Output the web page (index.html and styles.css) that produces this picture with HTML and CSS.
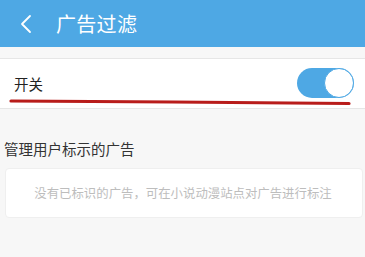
FILE: index.html
```html
<!DOCTYPE html>
<html lang="zh">
<head>
<meta charset="utf-8">
<link rel="stylesheet" href="styles.css">
</head>
<body>
<div class="page">
  <header class="topbar">
    <svg class="back" width="14" height="20" viewBox="0 0 14 20"><path d="M11 2 L3 10 L11 18" fill="none" stroke="#fff" stroke-width="1.8" stroke-linecap="round" stroke-linejoin="round"/></svg>
    <span class="title">广告过滤</span>
  </header>
  <div class="gap"></div>
  <div class="row">
    <span class="label">开关</span>
    <div class="switch"><div class="knob"></div></div>
    <svg class="mark" width="345" height="10" viewBox="0 0 345 10"><path d="M3 3 C 100 3.5, 250 4.5, 341 5.5" fill="none" stroke="#b81c1a" stroke-width="3.2" stroke-linecap="round"/></svg>
  </div>
  <div class="section-title">管理用户标示的广告</div>
  <div class="card">没有已标识的广告，可在小说动漫站点对广告进行标注</div>
</div>
</body>
</html>
```
FILE: styles.css
```css
* { box-sizing: border-box; }
html, body { margin: 0; padding: 0; }
body {
  width: 365px;
  height: 257px;
  overflow: hidden;
  background: #f7f7f7;
  font-family: "Noto Sans CJK SC", "Noto Sans", sans-serif;
}
.page { display: flex; flex-direction: column; }
.topbar {
  height: 47px;
  background: #4ea8e4;
  display: flex;
  align-items: center;
  padding-left: 19px;
}
.back { display: block; margin-right: 23px; margin-top: 1px; }
.title { color: #fff; font-size: 20px; line-height: 1; letter-spacing: 0.3px; }
.gap { height: 12px; border-bottom: 1px solid #e6e6e6; background: #f7f7f7; }
.row {
  position: relative;
  height: 50px;
  background: #fff;
  border-bottom: 1px solid #e6e6e6;
  display: flex;
  align-items: center;
  justify-content: space-between;
  padding: 0 11px 0 14px;
}
.label { font-size: 14.5px; color: #222; }
.switch {
  width: 57px;
  height: 30px;
  border-radius: 15px;
  background: #4ea8e4;
  position: relative;
  margin-top: -1px;
}
.knob {
  position: absolute;
  right: 0;
  top: 0;
  width: 30px;
  height: 30px;
  border-radius: 50%;
  background: #fff;
  border: 1.5px solid #4ea8e4;
}
.mark { position: absolute; left: 8px; top: 39px; }
.section-title {
  margin: 30px 0 0 4px;
  font-size: 14.5px;
  color: #333;
  line-height: 20px;
}
.card {
  margin: 9px 2px 0 5px;
  height: 50px;
  background: #fff;
  border: 1px solid #efefef;
  border-radius: 4px;
  display: flex;
  align-items: center;
  justify-content: center;
  font-size: 12.4px;
  color: #bdbdbd;
  padding-right: 2px;
}
```
